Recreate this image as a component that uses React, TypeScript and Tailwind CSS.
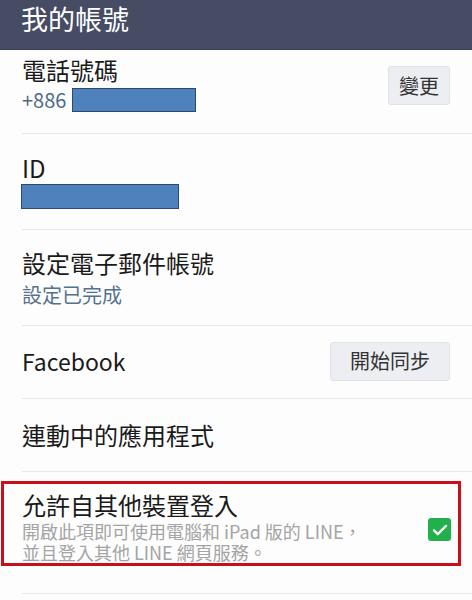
import React from 'react';

const font = { fontFamily: '"Noto Sans CJK TC", "Noto Sans", sans-serif' };

function Redacted({ className }: { className: string }) {
    return <div className={`bg-[#4f81bd] border border-[#2c4a70] ${className}`} />;
}

function GrayButton({ label, className }: { label: string; className: string }) {
    return (
        <button className={`flex items-center justify-center bg-[#eceef2] border border-[#e0e2e7] rounded-[3px] text-[20px] text-[#333] ${className}`}>
            {label}
        </button>
    );
}

export default function App() {
    return (
        <div className="w-[472px] h-[600px] bg-[#fdfdfd] overflow-hidden" style={font}>
            {/* header */}
            <div className="h-[50px] bg-[#454c63] flex items-start pl-[21px] pt-[1px] border-b border-[#3a4055]">
                <h1 className="text-[27px] leading-[36px] text-white">我的帳號</h1>
            </div>

            {/* 電話號碼 */}
            <div className="h-[84px] ml-[22px] border-b border-[#e8e8e8] flex justify-between">
                <div className="pt-[5px]">
                    <div className="text-[24px] leading-[30px] text-[#1a1a1a]">電話號碼</div>
                    <div className="flex items-center gap-[6px] mt-[1px] h-[28px]">
                        <span className="text-[20px] text-[#4f6a88]">+886</span>
                        <Redacted className="w-[124px] h-[24px]" />
                    </div>
                </div>
                <GrayButton label="變更" className="w-[62px] h-[39px] mt-[16px] mr-[22px]" />
            </div>

            {/* ID */}
            <div className="h-[96px] ml-[22px] border-b border-[#e8e8e8] pt-[19px]">
                <div className="text-[24px] leading-[30px] text-[#1a1a1a]">ID</div>
                <Redacted className="w-[158px] h-[25px] -ml-[1px] mt-[1px]" />
            </div>

            {/* 電子郵件 */}
            <div className="h-[96px] ml-[22px] border-b border-[#e8e8e8] pt-[18px]">
                <div className="text-[24px] leading-[30px] text-[#1a1a1a]">設定電子郵件帳號</div>
                <div className="text-[20px] leading-[30px] mt-[2px] text-[#557190]">設定已完成</div>
            </div>

            {/* Facebook */}
            <div className="h-[73px] ml-[22px] border-b border-[#e8e8e8] flex items-center justify-between">
                <span className="text-[23px] text-[#1a1a1a] -mt-[1px]">Facebook</span>
                <GrayButton label="開始同步" className="w-[120px] h-[39px] mr-[22px] -mt-[2px]" />
            </div>

            {/* 連動中的應用程式 */}
            <div className="h-[73px] ml-[22px] border-b border-[#e8e8e8] flex items-center">
                <span className="text-[24px] text-[#1a1a1a]">連動中的應用程式</span>
            </div>

            {/* 允許自其他裝置登入 */}
            <div className="h-[113px] border-b border-[#e8e8e8] ml-[22px]">
                <div className="mt-[9px] -ml-[21px] w-[460px] h-[85px] border-[3px] border-[#c8101a] flex justify-between pl-[18px] pr-[7px]">
                    <div className="pt-[6px]">
                        <div className="text-[24px] leading-[30px] text-[#1a1a1a]">允許自其他裝置登入</div>
                        <div className="mt-[1px] text-[18px] leading-[21px] text-[#a4a4a4]">
                            <div>開啟此項即可使用電腦和 iPad 版的 LINE，</div>
                            <div>並且登入其他 LINE 網頁服務。</div>
                        </div>
                    </div>
                    <div className="w-[23px] h-[23px] mt-[34px] rounded-[3px] bg-[#21b04b] flex items-center justify-center">
                        <svg viewBox="0 0 24 24" className="w-[18px] h-[18px]" fill="none" stroke="white" strokeWidth="3" strokeLinecap="round" strokeLinejoin="round">
                            <path d="M4 12.5l5 5L20 6.5" />
                        </svg>
                    </div>
                </div>
            </div>
        </div>
    );
}
